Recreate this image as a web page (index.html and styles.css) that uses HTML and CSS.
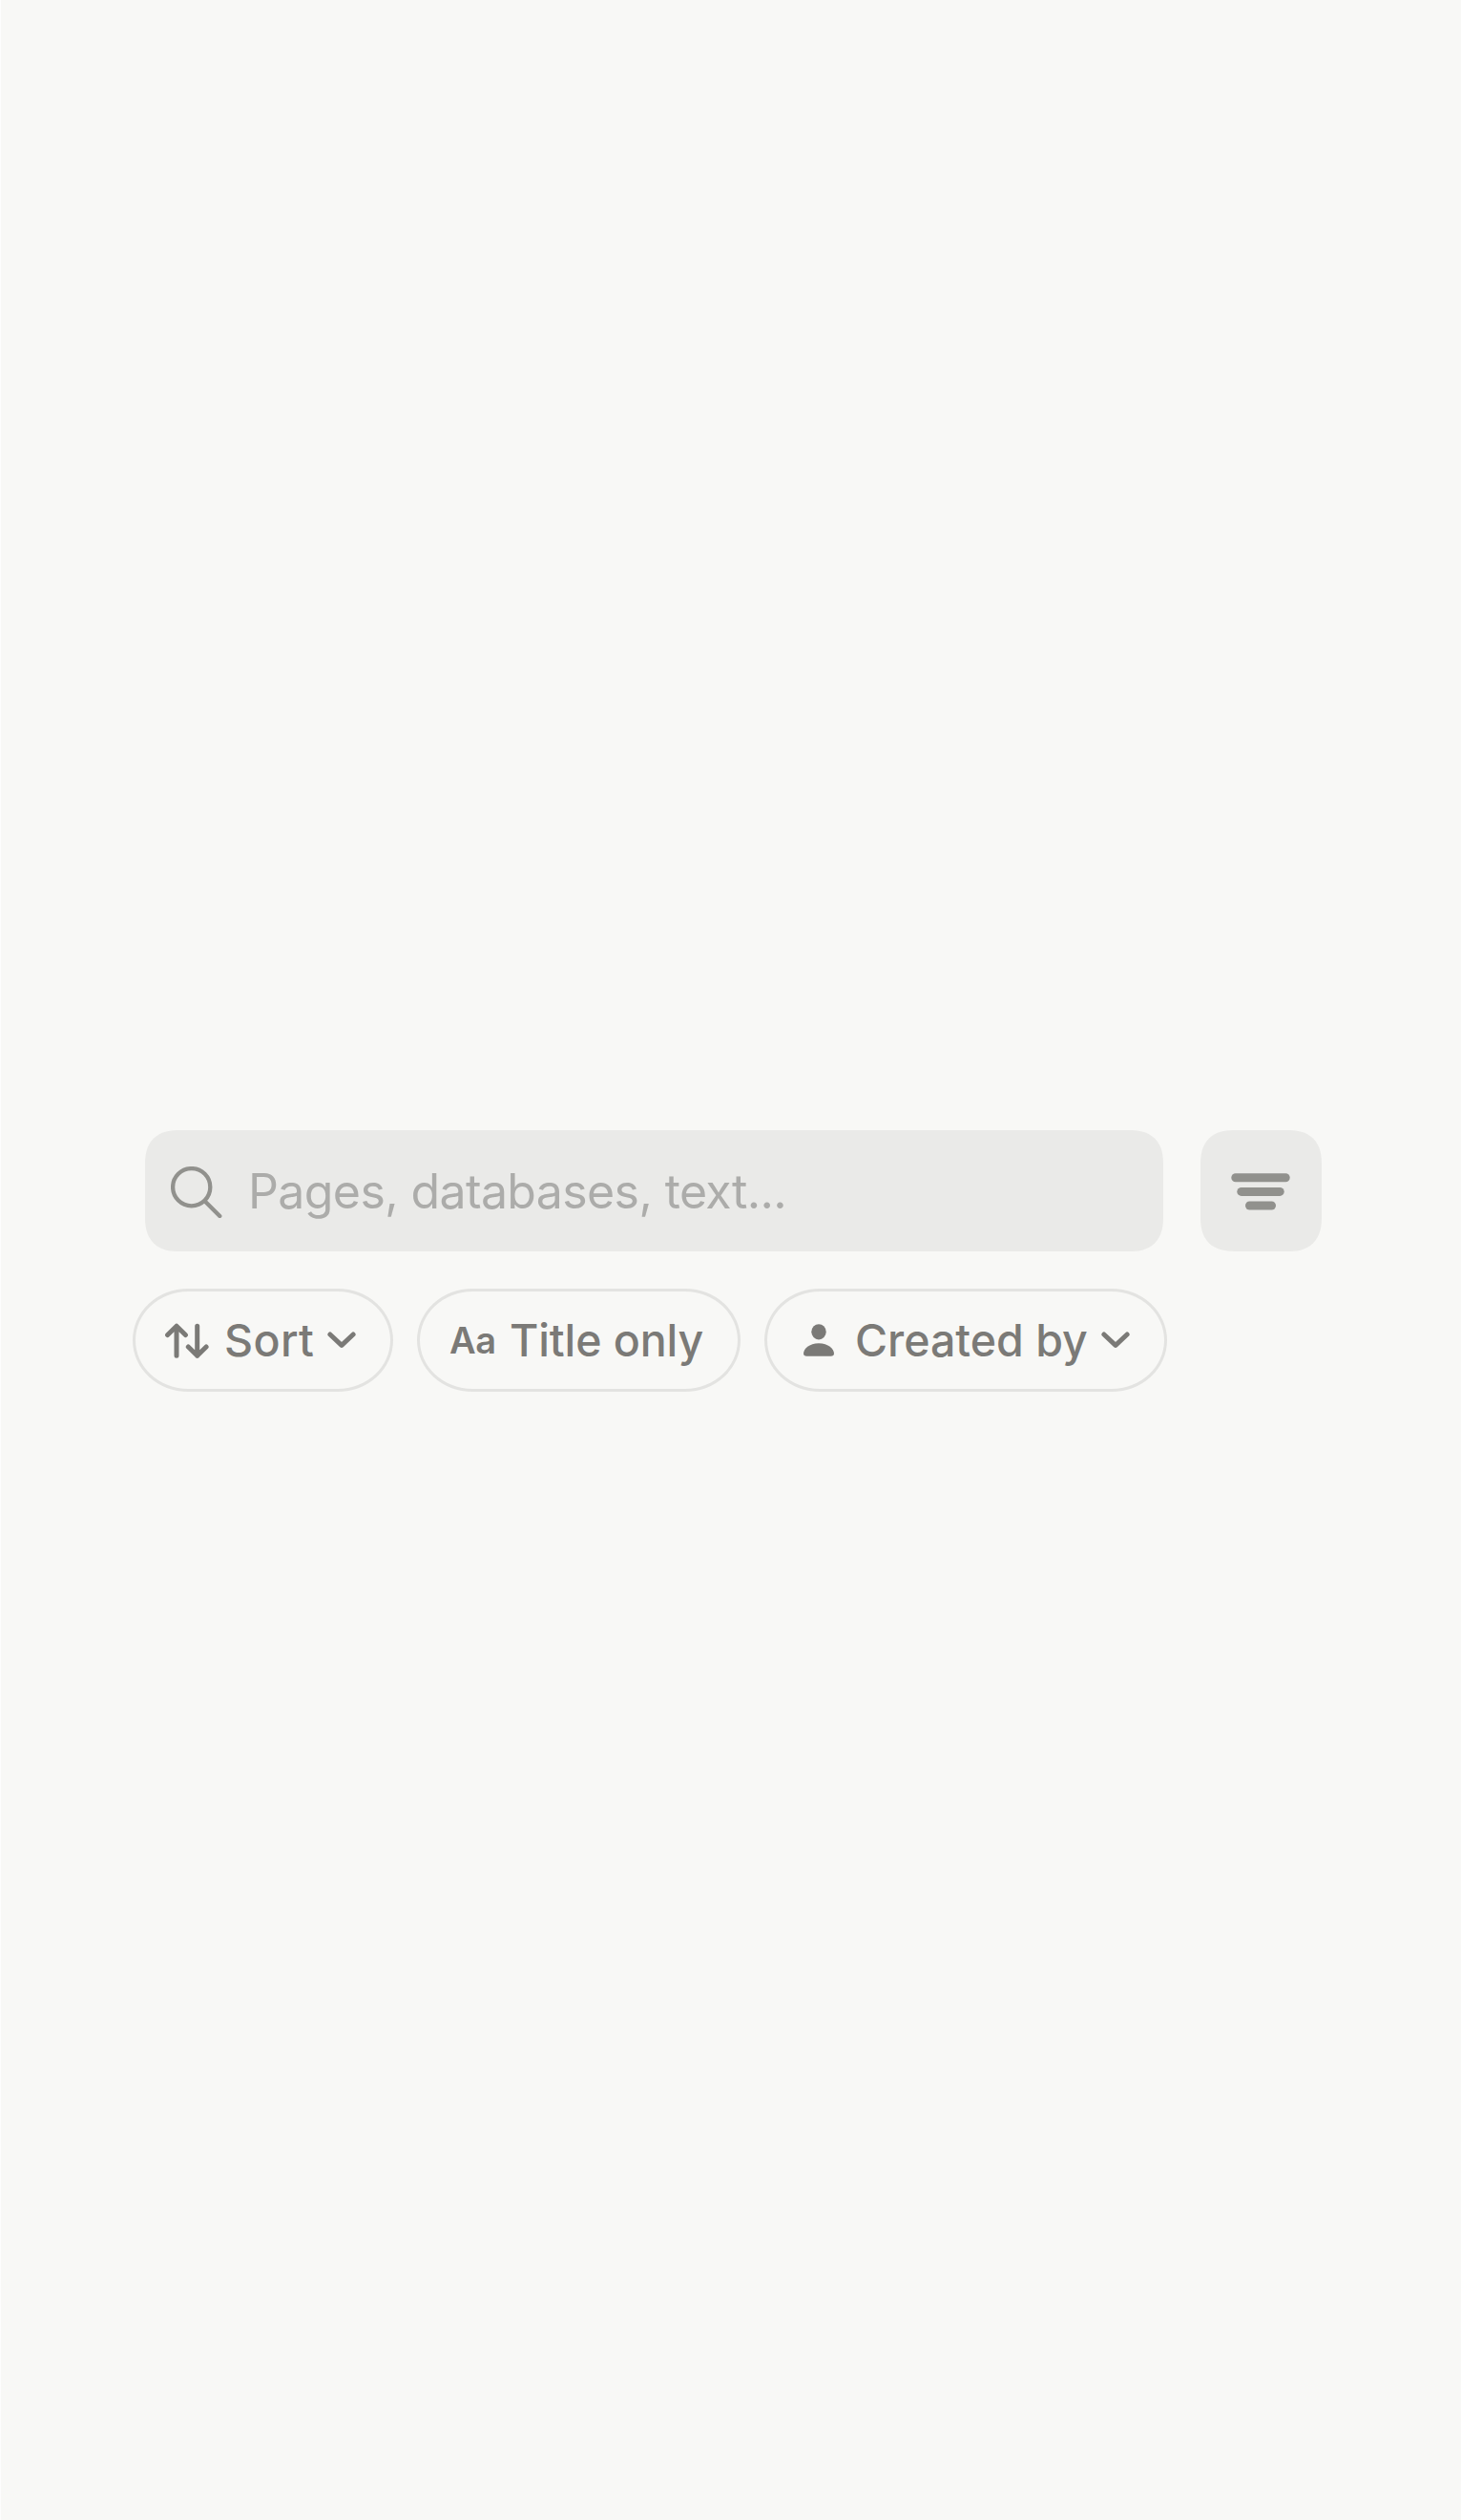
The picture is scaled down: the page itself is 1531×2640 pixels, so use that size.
FILE: index.html
```html
<!DOCTYPE html>
<html lang="en">
<head>
<meta charset="utf-8">
<title>Search</title>
<link rel="stylesheet" href="styles.css">
</head>
<body>
<main class="search">
  <div class="search-row">
    <label class="field">
      <svg class="field-icon" width="54" height="54" viewBox="0 0 54 54" fill="none" stroke-linecap="round"><circle cx="21.7" cy="21.7" r="19.6"/><path d="M35.8 36.4 51.3 52"/></svg>
      <span class="placeholder">Pages, databases, text...</span>
    </label>
    <button class="filter" aria-label="Filters">
      <svg width="62" height="40" viewBox="0 0 62 40"><rect x="0.3" y="0.3" width="61.4" height="9" rx="4.5"/><rect x="6.3" y="14.9" width="49.4" height="9" rx="4.5"/><rect x="15" y="29.5" width="32" height="9" rx="4.5"/></svg>
    </button>
  </div>
  <div class="chips">
    <button class="chip chip-sort">
      <svg class="sort-icon" width="46" height="38" viewBox="0 0 46 38"><path d="M12 34.3V3.2M2.6 12.5 12 3.2l9.4 9.3M33.7 3.2v31.1M24.3 25l9.4 9.3L43.1 25"/></svg>
      <span class="label label-sort">Sort</span>
      <svg class="chevron" width="30" height="18" viewBox="0 0 30 18"><path d="M2.9 3 15 14.4 27.1 3"/></svg>
    </button>
    <button class="chip chip-title">
      <span class="aa">Aa</span>
      <span class="label label-title">Title only</span>
    </button>
    <button class="chip chip-created">
      <svg class="person" width="32" height="34" viewBox="0 0 32 34"><ellipse cx="16" cy="8.3" rx="7.7" ry="8.1"/><path d="M3.4 33.7C1.2 33.7 0 32.7 0 30.9 0 26.2 6 20.2 16 20.2s16 6 16 10.7c0 1.8-1.2 2.8-3.4 2.8Z"/></svg>
      <span class="label label-created">Created by</span>
      <svg class="chevron" width="30" height="18" viewBox="0 0 30 18"><path d="M2.9 3 15 14.4 27.1 3"/></svg>
    </button>
  </div>
</main>
</body>
</html>
```
FILE: styles.css
```css
* { box-sizing: border-box; }
body {
  margin: 0;
  min-height: 2640px;
  background: #f8f8f6;
  border-left: 1px solid #fdfdfd;
  font-family: Inter, "Liberation Sans", sans-serif;
}
button { margin: 0; padding: 0; border: 0; background: none; font: inherit; }
svg { display: block; flex: none; }
.search { padding: 1184px 0 0 138px; }
.search-row { display: flex; gap: 39px; padding-left: 13px; }
.field, .filter { height: 127px; background: #eaeae8; border-radius: 31px; }
@supports (corner-shape: superellipse(1.3)) {
  .field, .filter { border-radius: 36px; corner-shape: superellipse(1.3); }
}
.field { display: flex; align-items: center; width: 1067px; padding-left: 27px; }
.field-icon { margin-top: 2px; stroke: #91918d; stroke-width: 4.3px; }
.placeholder {
  margin-left: 27px;
  font-size: 50px;
  line-height: 60px;
  letter-spacing: -0.61px;
  color: #acacaa;
  white-space: nowrap;
}
.filter { display: flex; align-items: center; justify-content: center; width: 127px; padding: 2px 2px 0 0; fill: #91918d; }
.chips { display: flex; gap: 25px; margin-top: 39px; }
.chip {
  display: flex;
  align-items: center;
  height: 108px;
  border: 3px solid #e3e3e1;
  border-radius: 58px / 54px;
  color: #7b7a77;
  white-space: nowrap;
}
.chip svg path { stroke-linecap: round; stroke-linejoin: round; }
.chip-sort { width: 273px; padding-left: 31px; }
.chip-title { width: 339px; padding-left: 31px; }
.chip-created { width: 422px; padding-left: 38px; }
.sort-icon, .chevron { fill: none; stroke: #7b7a77; stroke-width: 5px; }
.label { font-size: 46.5px; font-weight: 500; line-height: 56px; }
.label-sort { margin-left: 16px; letter-spacing: 0.4px; }
.label-title { margin-left: 14px; letter-spacing: -0.1px; }
.label-created { margin-left: 22px; }
.chevron { margin-left: 14px; }
.sort-icon { margin-top: 1px; }
.aa { font-size: 38px; font-weight: 600; line-height: 48px; letter-spacing: -0.3px; }
.person { fill: #7b7a77; }
```
